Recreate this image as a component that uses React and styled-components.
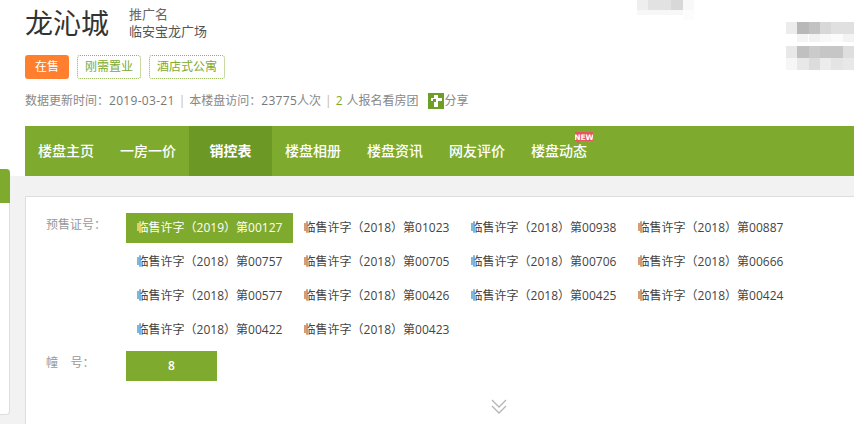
import React from 'react';
import styled, { createGlobalStyle } from 'styled-components';

const GREEN = '#7eaa2e';
const FONT = '"Open Sans", "Noto Sans CJK SC", sans-serif';

const Global = createGlobalStyle`
  html, body { margin: 0; padding: 0; background: #fff; overflow: hidden; }
  body { font-family: ${FONT}; width: 854px; height: 424px; }
`;

const Page = styled.div`
  position: relative;
  width: 854px;
  height: 424px;
  overflow: hidden;
`;

const Header = styled.header`
  height: 126px;
  padding-left: 25px;
  box-sizing: border-box;
`;

const TitleRow = styled.div`
  display: flex;
  align-items: flex-start;
  height: 55px;
`;

const Title = styled.h1`
  margin: 0;
  width: 104px;
  font-size: 28px;
  font-weight: 400;
  line-height: 38px;
  margin-top: 4px;
  color: #333;
`;

const AliasBlock = styled.div`
  font-size: 13px;
  line-height: 17px;
  color: #666;
  padding-top: 6px;
`;

const AliasName = styled.div`
  color: #555;
`;

const Tags = styled.div`
  display: flex;
  gap: 8px;
  height: 24px;
  margin-bottom: 13px;
`;

const Status = styled.span`
  width: 44px;
  height: 24px;
  line-height: 24px;
  border-radius: 3px;
  background: #ff7f2e;
  color: #fff;
  font-size: 12px;
  text-align: center;
`;

const Tag = styled.span`
  height: 22px;
  line-height: 22px;
  padding: 0 7px;
  border: 1px dotted #8fb548;
  border-radius: 3px;
  color: ${GREEN};
  font-size: 12px;
`;

const Stats = styled.div`
  display: flex;
  align-items: center;
  height: 18px;
  font-size: 12px;
  line-height: 18px;
  color: #888;
  white-space: pre;
`;

const Digits = styled.span`
  letter-spacing: 0.3px;
  color: #777;
`;

const Pipe = styled.span`
  margin: 0 4px;
  color: #c9b98a;
`;

const Count = styled.span`
  color: ${GREEN};
  margin-right: 4px;
`;

const ShareIcon = styled.svg`
  width: 16px;
  height: 16px;
  margin: 0 1px 0 9px;
  flex: none;
`;

const Nav = styled.nav`
  display: flex;
  height: 50px;
  margin-left: 25px;
  background: ${GREEN};
`;

const NavItem = styled.a`
  position: relative;
  display: block;
  width: ${p => p.$w}px;
  line-height: 50px;
  text-align: center;
  color: #fff;
  font-size: 14px;
  font-weight: ${p => (p.$active ? 700 : 500)};
  background: ${p => (p.$active ? '#6c9826' : 'transparent')};
`;

const NewBadge = styled.svg`
  position: absolute;
  left: 57px;
  top: 6px;
  width: 18px;
  height: 13px;
`;

const Body = styled.main`
  height: 248px;
  background: #f2f2f2;
  padding: 20px 0 0 25px;
  box-sizing: border-box;
  margin-left: 10px;
  padding-left: 15px;
`;

const Card = styled.section`
  position: relative;
  height: 300px;
  background: #fff;
  border: 1px solid #ddd;
  border-right: none;
  padding: 16px 0 0 20px;
`;

const Row = styled.div`
  display: flex;
  margin-bottom: ${p => p.$mb || 0}px;
`;

const Label = styled.div`
  width: 80px;
  flex: none;
  font-size: 12px;
  line-height: 24px;
  color: #999;
  white-space: pre;
`;

const Grid = styled.div`
  display: grid;
  grid-template-columns: repeat(4, 167px);
  grid-auto-rows: 34px;
  margin-bottom: -4px;
`;

const Permit = styled.a`
  display: block;
  width: 167px;
  height: 30px;
  line-height: 30px;
  text-align: center;
  font-size: 12px;
  white-space: nowrap;
  background: ${p => (p.$active ? GREEN : 'transparent')};
  color: ${p => (p.$active ? '#fff' : '#444')};
`;

const Building = styled.a`
  display: block;
  width: 91px;
  height: 30px;
  line-height: 30px;
  text-align: center;
  font-size: 12px;
  font-weight: 600;
  background: ${GREEN};
  color: #fff;
`;

const More = styled.svg`
  position: absolute;
  left: 464px;
  top: 202px;
  width: 18px;
  height: 16px;
`;

const SideRail = styled.aside`
  position: absolute;
  left: 0;
  top: 169px;
  width: 10px;
  height: 255px;
  background: #f2f2f2;
`;

const SideTab = styled.div`
  height: 34px;
  background: ${GREEN};
  border-top-right-radius: 4px;
`;

const SidePanel = styled.div`
  height: 212px;
  box-sizing: border-box;
  width: 10px;
  background: #fff;
  border-right: 1px solid #ddd;
  border-bottom: 1px solid #ddd;
  border-bottom-right-radius: 4px;
`;

const Mosaic = styled.svg`
  position: absolute;
  display: block;
`;

const permits = [
  '临售许字（2019）第00127', '临售许字（2018）第01023', '临售许字（2018）第00938', '临售许字（2018）第00887',
  '临售许字（2018）第00757', '临售许字（2018）第00705', '临售许字（2018）第00706', '临售许字（2018）第00666',
  '临售许字（2018）第00577', '临售许字（2018）第00426', '临售许字（2018）第00425', '临售许字（2018）第00424',
  '临售许字（2018）第00422', '临售许字（2018）第00423',
];

const navs = [
  ['楼盘主页', 82], ['一房一价', 82], ['销控表', 83, true], ['楼盘相册', 82],
  ['楼盘资讯', 82], ['网友评价', 82], ['楼盘动态', 82, false, true],
];

const blocksRight = [
  [0, 22, 11, 12, '#ececec'], [11, 22, 12, 12, '#b8b8b8'], [23, 22, 11, 12, '#c2c2c2'], [34, 22, 11, 12, '#d8d8d8'], [45, 22, 23, 12, '#e0e0e0'],
  [11, 34, 11, 8, '#f4f4f4'], [23, 34, 11, 8, '#f2f2f2'], [34, 34, 11, 8, '#f8f8f8'], [45, 34, 12, 8, '#fbfbfb'], [57, 34, 11, 8, '#f3f3f3'],
  [0, 46, 11, 12, '#e8e8e8'], [11, 46, 12, 12, '#c0c0c0'], [23, 46, 11, 12, '#cbcbcb'], [34, 46, 23, 12, '#c6c6c6'], [57, 46, 11, 12, '#dedede'],
  [0, 58, 11, 12, '#f6f6f6'], [11, 58, 12, 12, '#e8e8e8'], [23, 58, 11, 12, '#dcdcdc'], [34, 58, 11, 12, '#ececec'], [45, 58, 12, 12, '#e4e4e4'], [57, 58, 11, 12, '#e8e8e8'],
];

const blocksTop = [
  [0, 0, 11, 10, '#eeeeee'], [11, 0, 23, 10, '#e2e2e2'], [34, 0, 12, 10, '#d8d8d8'], [46, 0, 11, 10, '#f8f8f8'],
  [0, 10, 57, 5, '#f7f7f7'], [46, 10, 11, 10, '#fcfcfc'],
];

export default function App() {
  return (
    <Page>
      <Global />
      <Header>
        <TitleRow>
          <Title>龙沁城</Title>
          <AliasBlock>
            推广名
            <AliasName>临安宝龙广场</AliasName>
          </AliasBlock>
        </TitleRow>
        <Tags>
          <Status>在售</Status>
          <Tag>刚需置业</Tag>
          <Tag>酒店式公寓</Tag>
        </Tags>
        <Stats>
          数据更新时间：<Digits>2019-03-21</Digits><Pipe>|</Pipe>本楼盘访问：<Digits>23775</Digits>人次<Pipe>|</Pipe><Count>2</Count>人报名看房团
          <ShareIcon viewBox="0 0 16 16">
            <rect width="16" height="16" fill="#6f9e26" />
            <path d="M6 2h4v3h4v3h-4v6H6V8H3V5h3z" fill="#fff" />
            <rect x="5" y="6" width="3" height="3" fill="#6f9e26" />
          </ShareIcon>
          分享
        </Stats>
      </Header>
      <Nav>
        {navs.map(([t, w, a, n]) => (
          <NavItem key={t} $w={w} $active={a}>
            {t}
            {n && (
              <NewBadge viewBox="0 0 18 13">
                <path d="M0 0h18v9H4l-1 3-1-3H0z" fill="#e5575f" />
                <text x="9" y="7.5" textAnchor="middle" fontSize="7.5" fontWeight="700" fill="#fff" fontFamily='"DejaVu Sans", sans-serif'>NEW</text>
              </NewBadge>
            )}
          </NavItem>
        ))}
      </Nav>
      <Body>
        <Card>
          <Row $mb={6}>
            <Label>预售证号：</Label>
            <Grid>
              {permits.map((p, i) => <Permit key={p} $active={i === 0}>{p}</Permit>)}
            </Grid>
          </Row>
          <Row>
            <Label>幢    号：</Label>
            <Building>8</Building>
          </Row>
          <More viewBox="0 0 18 16">
            <path d="M2 1l7 7 7-7M2 7l7 7 7-7" fill="none" stroke="#b5b5b5" strokeWidth="1.3" />
          </More>
        </Card>
      </Body>
      <SideRail>
        <SideTab />
        <SidePanel />
      </SideRail>
      <Mosaic style={{ left: 786, top: 0 }} width="68" height="72" viewBox="0 0 68 72">
        {blocksRight.map(([x, y, w, h, c], i) => <rect key={i} x={x} y={y} width={w} height={h} fill={c} />)}
      </Mosaic>
      <Mosaic style={{ left: 637, top: 0 }} width="57" height="22" viewBox="0 0 57 22">
        {blocksTop.map(([x, y, w, h, c], i) => <rect key={i} x={x} y={y} width={w} height={h} fill={c} />)}
      </Mosaic>
    </Page>
  );
}
